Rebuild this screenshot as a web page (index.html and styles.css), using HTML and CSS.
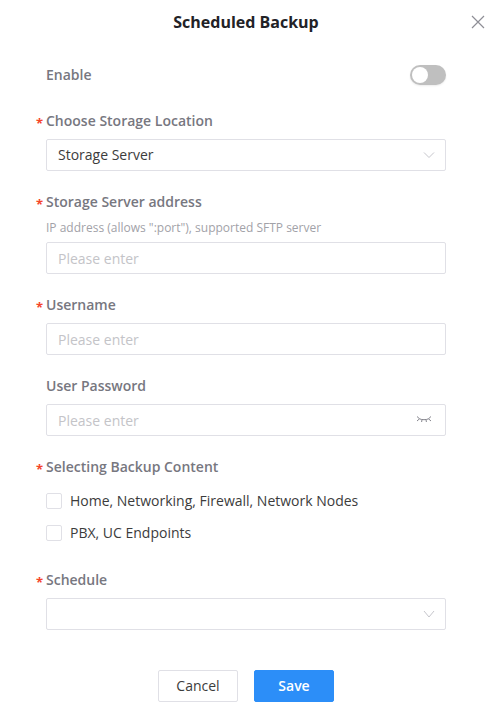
FILE: index.html
```html
<html>

<head>
    <link rel="stylesheet" href="styles.css">
</head>

<body>
    <div class="dialog">
        <header class="dialog__header">
            <h1>Scheduled Backup</h1>
            <svg class="close" width="14" height="14" viewBox="0 0 14 14">
                <path d="M1 1L13 13M13 1L1 13" />
            </svg>
        </header>

        <form class="form">
            <div class="enable">
                <span class="label">Enable</span>
                <span class="switch"><span class="switch__knob"></span></span>
            </div>

            <div class="field">
                <label class="label required">Choose Storage Location</label>
                <div class="input">
                    <span class="value">Storage Server</span>
                    <svg class="arrow" width="12" height="8" viewBox="0 0 12 8">
                        <path d="M1 1.5L6 6.5L11 1.5" />
                    </svg>
                </div>
            </div>

            <div class="field">
                <label class="label label--tight required">Storage Server address</label>
                <p class="hint">IP address (allows ":port"), supported SFTP server</p>
                <div class="input">
                    <span class="placeholder">Please enter</span>
                </div>
            </div>

            <div class="field">
                <label class="label required">Username</label>
                <div class="input">
                    <span class="placeholder">Please enter</span>
                </div>
            </div>

            <div class="field">
                <label class="label">User Password</label>
                <div class="input">
                    <span class="placeholder">Please enter</span>
                    <svg class="eye" width="16" height="10" viewBox="0 0 16 10">
                        <path d="M1 1.5L3.5 3.8C6 5 10 5 12.5 3.8L15 1.5M1 6L3.5 3.8M15 6L12.5 3.8M6 4.6L5.6 7M10 4.6L10.4 7" />
                    </svg>
                </div>
            </div>

            <div class="field">
                <label class="label required">Selecting Backup Content</label>
                <div class="check">
                    <span class="check__box"></span>
                    <span class="check__text">Home, Networking, Firewall, Network Nodes</span>
                </div>
                <div class="check">
                    <span class="check__box"></span>
                    <span class="check__text">PBX, UC Endpoints</span>
                </div>
            </div>

            <div class="field">
                <label class="label required">Schedule</label>
                <div class="input">
                    <svg class="arrow arrow--push" width="12" height="8" viewBox="0 0 12 8">
                        <path d="M1 1L6 7L11 1" />
                    </svg>
                </div>
            </div>
        </form>

        <footer class="buttons">
            <button class="button" type="button">Cancel</button>
            <button class="button button--primary" type="button">Save</button>
        </footer>
    </div>
</body>

</html>
```

FILE: styles.css
```css
body {
    margin: 0;
    padding: 0;
    background-color: #fff;
    font-family: "Open Sans", "Noto Sans", Arial, sans-serif;
    font-size: 14px;
    color: #3c3c3c;
    overflow: hidden;
}

.dialog {
    width: 498px;
    height: 723px;
}

.dialog__header {
    position: relative;
    padding-top: 11px;
    height: 54px;
    box-sizing: border-box;
}

h1 {
    margin: 0;
    width: 492px;
    font-size: 16px;
    line-height: 22px;
    font-weight: 700;
    text-align: center;
    color: #222226;
}

svg path {
    fill: none;
}

.close {
    position: absolute;
    top: 15px;
    right: 13px;
}

.close path {
    stroke: #8e8e96;
    stroke-width: 1.2;
}

.form {
    width: 400px;
    margin-left: 46px;
}

.label {
    display: block;
    position: relative;
    font-size: 14px;
    line-height: 22px;
    font-weight: 600;
    color: #77777f;
}

.required::before {
    content: "*";
    position: absolute;
    left: -10px;
    top: 2px;
    font-size: 13px;
    color: #f5452a;
    font-weight: 700;
}

.enable {
    display: flex;
    justify-content: space-between;
    align-items: center;
    height: 22px;
    margin-top: 10px;
    margin-bottom: 24px;
}

.switch {
    display: block;
    width: 36px;
    height: 20px;
    border-radius: 10px;
    background-color: #bfbfbf;
    box-shadow: 0 1px 2px rgba(0, 0, 0, 0.08);
}

.switch__knob {
    display: block;
    width: 16px;
    height: 16px;
    margin: 2px;
    border-radius: 50%;
    background-color: #fff;
}

.field {
    margin-bottom: 20px;
}

.field > .label {
    margin-bottom: 7px;
}

.field > .label--tight {
    margin-bottom: 0;
}

.hint {
    margin: 6px 0 6px;
    font-size: 12px;
    line-height: 17px;
    color: #a2a2a8;
}

.input {
    display: flex;
    justify-content: space-between;
    align-items: center;
    box-sizing: border-box;
    height: 32px;
    padding: 0 15px 0 11px;
    border: 1px solid #e0e0e6;
    border-radius: 2px;
    font-size: 14px;
}

.placeholder {
    color: #c4c4c8;
}

.value {
    padding-bottom: 2px;
    color: #3c3c3c;
}

.arrow {
    margin-right: -5px;
}

.arrow path {
    stroke: #c6c6cc;
    stroke-width: 1;
}

.arrow--push {
    margin-left: auto;
}

.eye {
    margin-right: -2px;
}

.eye path {
    stroke: #85858d;
    stroke-width: 1;
}

.check {
    display: flex;
    align-items: center;
    gap: 8px;
    height: 32px;
    color: #3c3c3c;
}

.check__box {
    box-sizing: border-box;
    width: 16px;
    height: 16px;
    border: 1px solid #e0e0e6;
    border-radius: 2px;
}

.check__text {
    padding-bottom: 2px;
}

.buttons {
    display: flex;
    justify-content: center;
    gap: 16px;
    margin-top: 40px;
    padding-right: 6px;
}

.button {
    width: 80px;
    height: 32px;
    padding: 0 0 2px;
    border: 1px solid #e0e0e6;
    border-radius: 2px;
    background-color: #fff;
    font-family: inherit;
    font-size: 14px;
    color: #3c3c3c;
}

.button--primary {
    border-color: #2c8ef8;
    background-color: #2c8ef8;
    color: #fff;
    font-weight: 600;
}
```
